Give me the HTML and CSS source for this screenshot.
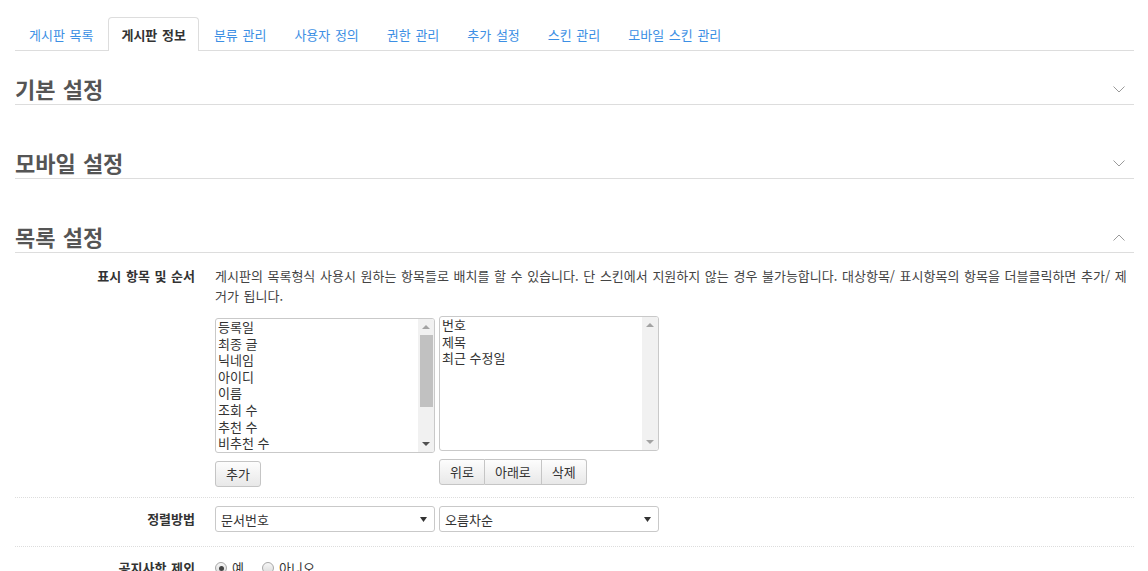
FILE: index.html
```html
<!DOCTYPE html>
<html lang="ko">
<head>
<meta charset="utf-8">
<title>게시판 정보</title>
<link rel="stylesheet" href="styles.css">
</head>
<body>
<div class="page">
  <ul class="tabs">
    <li class="tab"><a href="#">게시판 목록</a></li>
    <li class="tab active"><a href="#">게시판 정보</a></li>
    <li class="tab"><a href="#">분류 관리</a></li>
    <li class="tab"><a href="#">사용자 정의</a></li>
    <li class="tab"><a href="#">권한 관리</a></li>
    <li class="tab"><a href="#">추가 설정</a></li>
    <li class="tab"><a href="#">스킨 관리</a></li>
    <li class="tab"><a href="#">모바일 스킨 관리</a></li>
  </ul>

  <section class="sec sec-first">
    <h2 class="sec-title"><span>기본 설정</span>
      <svg class="chev" width="12" height="7" viewBox="0 0 12 7"><path d="M0.5 0.5 L6 6 L11.5 0.5" fill="none" stroke="#9a9a9a" stroke-width="1"/></svg>
    </h2>
  </section>

  <section class="sec">
    <h2 class="sec-title"><span>모바일 설정</span>
      <svg class="chev" width="12" height="7" viewBox="0 0 12 7"><path d="M0.5 0.5 L6 6 L11.5 0.5" fill="none" stroke="#9a9a9a" stroke-width="1"/></svg>
    </h2>
  </section>

  <section class="sec">
    <h2 class="sec-title"><span>목록 설정</span>
      <svg class="chev" width="12" height="7" viewBox="0 0 12 7"><path d="M0.5 6.5 L6 1 L11.5 6.5" fill="none" stroke="#9a9a9a" stroke-width="1"/></svg>
    </h2>

    <div class="row row-list">
      <div class="label">표시 항목 및 순서</div>
      <div class="field">
        <p class="desc">게시판의 목록형식 사용시 원하는 항목들로 배치를 할 수 있습니다. 단 스킨에서 지원하지 않는 경우 불가능합니다. 대상항목/ 표시항목의 항목을 더블클릭하면 추가/ 제거가 됩니다.</p>
        <div class="lists">
          <div class="col col-left">
            <div class="listbox">
              <ul class="items">
                <li>등록일</li>
                <li>최종 글</li>
                <li>닉네임</li>
                <li>아이디</li>
                <li>이름</li>
                <li>조회 수</li>
                <li>추천 수</li>
                <li>비추천 수</li>
              </ul>
              <div class="sbar">
                <span class="arr arr-up light"></span>
                <span class="thumb"></span>
                <span class="arr arr-down"></span>
              </div>
            </div>
            <div class="btns"><button class="btn">추가</button></div>
          </div>
          <div class="col col-right">
            <div class="listbox">
              <ul class="items">
                <li>번호</li>
                <li>제목</li>
                <li>최근 수정일</li>
              </ul>
              <div class="sbar">
                <span class="arr arr-up light"></span>
                <span class="spacer"></span>
                <span class="arr arr-down light"></span>
              </div>
            </div>
            <div class="btns group">
              <button class="btn">위로</button><button class="btn">아래로</button><button class="btn">삭제</button>
            </div>
          </div>
        </div>
      </div>
    </div>

    <div class="row row-sort">
      <div class="label">정렬방법</div>
      <div class="field selects">
        <div class="select"><span>문서번호</span><svg width="7" height="5" viewBox="0 0 7 5"><path d="M0 0 H7 L3.5 5 Z" fill="#333"/></svg></div>
        <div class="select"><span>오름차순</span><svg width="7" height="5" viewBox="0 0 7 5"><path d="M0 0 H7 L3.5 5 Z" fill="#333"/></svg></div>
      </div>
    </div>

    <div class="row row-radio">
      <div class="label">공지사항 제외</div>
      <div class="field radios">
        <label class="radio"><span class="dot checked"></span>예</label>
        <label class="radio"><span class="dot"></span>아니오</label>
      </div>
    </div>
  </section>
</div>
</body>
</html>
```

FILE: styles.css
```css
html, body {
  margin: 0;
  padding: 0;
  background: #fff;
}

body {
  font-family: "Noto Sans CJK KR", "Noto Sans", sans-serif;
  font-size: 13px;
  word-spacing: 1px;
  color: #333;
  overflow: hidden;
}

.page {
  padding: 0 14px 0 15px;
}

/* tabs */
.tabs {
  display: flex;
  align-items: flex-end;
  list-style: none;
  margin: 0;
  padding: 17px 0 0 1px;
  border-bottom: 1px solid #ddd;
}

.tab {
  margin-right: 2px;
  margin-bottom: -1px;
}

.tab a {
  display: block;
  height: 33px;
  line-height: 33px;
  padding: 0 12px;
  border: 1px solid transparent;
  border-bottom: 0;
  border-radius: 4px 4px 0 0;
  color: #3c8fe4;
  text-decoration: none;
  font-size: 13px;
}

.tab.active a {
  border-color: #ddd;
  background: #fff;
  color: #333;
  font-weight: bold;
}

/* sections */
.sec-title {
  display: flex;
  align-items: center;
  justify-content: space-between;
  margin: 41px 0 0;
  height: 32px;
  line-height: 32px;
  border-bottom: 1px solid #ddd;
  font-size: 22px;
  font-weight: bold;
  color: #555;
}

.sec-first .sec-title {
  margin-top: 21px;
}

.chev {
  margin-right: 9px;
  margin-top: 2px;
}

/* form rows */
.row {
  display: flex;
  border-bottom: 1px dotted #ddd;
}

.label {
  flex: 0 0 180px;
  padding-right: 20px;
  text-align: right;
  font-weight: bold;
  line-height: 20px;
  color: #333;
}

.field {
  flex: 1;
  min-width: 0;
}

.row-list {
  padding: 13px 0 10px;
}

.desc {
  margin: 0;
  line-height: 20px;
  color: #444;
}

.lists {
  display: flex;
  gap: 4px;
  margin-top: 10px;
}

.col {
  width: 220px;
}

.col-left .listbox {
  margin-top: 2px;
}

.listbox {
  display: flex;
  height: 135px;
  box-sizing: border-box;
  border: 1px solid #c9c9c9;
  border-radius: 3px;
  overflow: hidden;
  background: #fff;
}

.items {
  flex: 1;
  list-style: none;
  margin: 0;
  padding: 0 0 0 2px;
  word-spacing: 0;
}

.items li {
  height: 16.6px;
  line-height: 16.6px;
  color: #333;
  white-space: nowrap;
}

.sbar {
  display: flex;
  flex-direction: column;
  align-items: center;
  width: 16px;
  background: #f1f1f1;
}

.arr {
  display: block;
  width: 0;
  height: 0;
  margin: 6px 0;
  border-left: 4px solid transparent;
  border-right: 4px solid transparent;
}

.arr-up {
  border-bottom: 4px solid #505050;
}

.arr-down {
  border-top: 4px solid #505050;
}

.arr-up.light {
  border-bottom-color: #a3a3a3;
}

.arr-down.light {
  border-top-color: #a3a3a3;
}

.thumb {
  display: block;
  width: 13px;
  height: 72px;
  background: #c1c1c1;
}

.sbar .thumb + .arr-down,
.sbar .spacer + .arr-down {
  margin-top: auto;
}

.spacer {
  flex: 1;
}

.btns {
  margin-top: 8px;
  display: flex;
}

.btn {
  height: 26px;
  padding: 0 10px;
  border: 1px solid #c5c5c5;
  border-radius: 3px;
  background: linear-gradient(#fdfdfd, #e8e8e8);
  font-family: inherit;
  font-size: 13px;
  color: #333;
  line-height: 24px;
}

.group .btn {
  border-radius: 0;
  border-left: 0;
  padding: 0 10px;
}

.group .btn:first-child {
  border-left: 1px solid #c5c5c5;
  border-radius: 3px 0 0 3px;
}

.group .btn:last-child {
  border-radius: 0 3px 3px 0;
}

/* sort row */
.row-sort {
  padding: 8px 0 14px;
  align-items: center;
}

.selects {
  display: flex;
  gap: 4px;
}

.select {
  display: flex;
  align-items: center;
  justify-content: space-between;
  box-sizing: border-box;
  width: 220px;
  height: 26px;
  padding: 0 7px 0 5px;
  border: 1px solid #c9c9c9;
  border-radius: 3px;
  background: #fff;
  color: #333;
}

/* radio row */
.row-radio {
  padding: 11px 0 10px;
  border-bottom: 0;
}

.radios {
  display: flex;
  align-items: center;
  gap: 18px;
  line-height: 20px;
}

.radio {
  display: flex;
  align-items: center;
  gap: 5px;
  color: #333;
}

.dot {
  display: inline-block;
  box-sizing: border-box;
  width: 12px;
  height: 12px;
  border: 1px solid #a8a8a8;
  border-radius: 50%;
  background: linear-gradient(#f6f6f6, #dcdcdc);
  position: relative;
}

.dot.checked::after {
  content: "";
  position: absolute;
  left: 2.5px;
  top: 2.5px;
  width: 5px;
  height: 5px;
  border-radius: 50%;
  background: #444;
}
```
